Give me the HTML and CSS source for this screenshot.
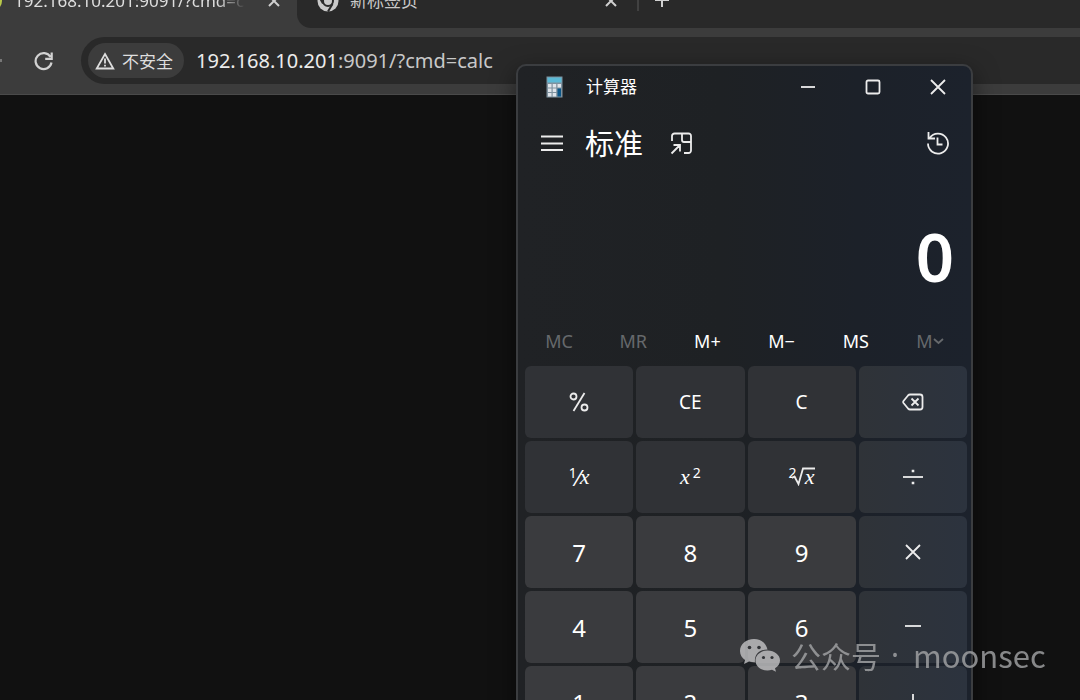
FILE: index.html
```html
<!DOCTYPE html>
<html lang="zh-CN">
<head>
<meta charset="utf-8">
<title>计算器</title>
<link rel="stylesheet" href="styles.css">
</head>
<body>
<header class="browser">
  <nav class="tabs">
    <div class="tab tab-active">
      <span class="favicon"></span>
      <span class="tab-title">192.168.10.201:9091/?cmd=calc</span>
      <button class="tab-close" aria-label="关闭标签页"><svg width="12" height="12" viewBox="0 0 12 12"><path d="M1 1l10 10M11 1L1 11"/></svg></button>
    </div>
    <div class="tab-rest">
      <div class="tab tab-new">
        <svg class="chrome" width="22" height="22" viewBox="0 0 22 22"><circle cx="11" cy="11" r="10.5" fill="#c9c9c9"/><circle cx="11" cy="11" r="5" fill="#c9c9c9" stroke="#2a2a2a" stroke-width="2"/><path d="M11 5.5h9.500M6 13.500L1.500 5.500M15.500 14L11 21.500" stroke="#2a2a2a" stroke-width="2"/></svg>
        <span class="tab-title">新标签页</span>
        <button class="tab-close" aria-label="关闭标签页"><svg width="12" height="12" viewBox="0 0 12 12"><path d="M1 1l10 10M11 1L1 11"/></svg></button>
      </div>
      <button class="tab-add" aria-label="打开新标签页"><svg width="16" height="16" viewBox="0 0 16 16"><path d="M8 0v14M1 7h14"/></svg></button>
    </div>
  </nav>
  <div class="toolbar">
    <span class="forward"></span>
    <button class="reload" aria-label="重新加载"><svg width="20" height="20" viewBox="0 0 20 20"><path d="M16.500 6A8 8 0 1 0 17.500 11.500M17.700 1.500v6.300h-6.500" fill="none" stroke="#d2d2d2" stroke-width="2.200"/></svg></button>
    <div class="omnibox">
      <button class="chip"><svg width="20" height="18" viewBox="0 0 20 18"><path d="M10 2L18.300 16.500H1.700Z" fill="none" stroke="#dedede" stroke-width="1.800"/><path d="M10 6.500v5M10 12.800v1.800" stroke="#dedede" stroke-width="1.800"/></svg>不安全</button>
      <div class="url"><span class="host">192.168.10.201</span>:9091/?cmd=calc</div>
    </div>
  </div>
</header>

<main class="calc">
  <div class="titlebar">
    <svg class="app-icon" width="17" height="22" viewBox="0 0 17 22"><rect x=".5" y=".5" width="16" height="21" fill="#7f929f"/><rect x="1.500" y="1.500" width="14" height="5" fill="#5bb9d6"/><path d="M2 8h3.500v3.500H2zM6.700 8h3.500v3.500H6.700zM11.500 8H15v3.500h-3.500zM2 12.500h3.500V16H2zM6.700 12.500h3.500V16H6.700zM2 17h3.500v3.500H2zM6.700 17h3.500v3.500H6.700z" fill="#dfe4ea"/><path d="M11.500 12.500H15v8h-3.500z" fill="#0b5688"/></svg>
    <span class="app-name">计算器</span>
    <button aria-label="最小化"><svg width="16" height="16" viewBox="0 0 16 16"><path d="M1 8h14"/></svg></button>
    <button aria-label="最大化"><svg width="16" height="16" viewBox="0 0 16 16"><rect x="1.500" y="1.500" width="13" height="13" rx="1.500"/></svg></button>
    <button aria-label="关闭"><svg width="16" height="16" viewBox="0 0 16 16"><path d="M1 1l14 14M15 1L1 15"/></svg></button>
  </div>
  <div class="mode">
    <button class="menu" aria-label="导航"><svg width="22" height="16" viewBox="0 0 22 16"><path d="M0 1.500h22M0 8.500h22M0 15h22"/></svg></button>
    <h1>标准</h1>
    <button aria-label="保持在顶部"><svg width="23" height="23" viewBox="0 0 23 23"><path d="M2 9V4a2.500 2.500 0 0 1 2.500-2.500h14A2.500 2.500 0 0 1 21 4v14.500a2.500 2.500 0 0 1-2.500 2.500H14M12 1.500v6.500a2 2 0 0 0 2 2h7M1.500 21.500L10 13M3.500 13H10v6.500"/></svg></button>
    <button class="history" aria-label="历史记录"><svg width="24" height="24" viewBox="0 0 24 24"><path d="M2.500 1v6.500H9M3.700 7A10 10 0 1 1 2 12.500M11.500 6.500v7h5"/></svg></button>
  </div>
  <output class="display">0</output>
  <div class="memory">
    <button disabled>MC</button><button disabled>MR</button><button>M+</button><button>M−</button><button>MS</button><button disabled>M<svg width="11" height="8" viewBox="0 0 11 8"><path d="M1 2l4.500 4L10 2"/></svg></button>
  </div>
  <div class="keys">
    <button aria-label="百分比"><svg width="20" height="20" viewBox="0 0 20 20"><circle cx="4.500" cy="4.500" r="3"/><circle cx="15.500" cy="15.500" r="3"/><path d="M15.500 1L4.500 19"/></svg></button>
    <button>CE</button>
    <button>C</button>
    <button aria-label="退格"><svg width="22" height="18" viewBox="0 0 22 18"><path d="M8 1.500h10a2.500 2.500 0 0 1 2.500 2.500v10a2.500 2.500 0 0 1-2.500 2.500H8Q7 16.500 6 15.500L1.500 10Q.8 9 1.500 8L6 2.500Q7 1.500 8 1.500ZM9.500 5.500l7 7M16.500 5.500l-7 7"/></svg></button>
    <button><span class="fn"><sup>1</sup><span class="slash">⁄</span><i>x</i></span></button>
    <button><span class="fn square"><i>x</i><sup>2</sup></span></button>
    <button><span class="fn"><sup>2</sup><span class="root"><svg width="24" height="20" viewBox="0 0 24 20"><path d="M1 12l2.500-1.500L7.500 18 12 2.500h12"/></svg><i>x</i></span></span></button>
    <button aria-label="除以"><svg width="20" height="20" viewBox="0 0 20 20"><path d="M0 10h20"/><path d="M8.700 4h2.600M8.700 16h2.600" stroke-width="2.600"/></svg></button>
    <button class="num">7</button><button class="num">8</button><button class="num">9</button>
    <button aria-label="乘以"><svg width="16" height="16" viewBox="0 0 16 16"><path d="M1 1l14 14M15 1L1 15"/></svg></button>
    <button class="num">4</button><button class="num">5</button><button class="num">6</button>
    <button aria-label="减"><svg width="18" height="18" viewBox="0 0 18 18"><path d="M1 8h16"/></svg></button>
    <button class="num">1</button><button class="num">2</button><button class="num">3</button>
    <button aria-label="加"><svg width="18" height="18" viewBox="0 0 18 18"><path d="M1 9h16M9 1v16"/></svg></button>
  </div>
</main>

<div class="watermark">
  <svg width="42" height="34" viewBox="0 0 42 34"><path d="M15 1C7 1 1 6 1 13c0 4 2 7 5 9l-1 4 5-2.500c2 .5 4 .7 6 .7C15 16 21 11.500 28.500 11.500 27 5 22 1 15 1Z"/><path d="M28.500 12.500C21.500 12.500 16.500 17 16.500 22.500s5 10 12 10c1.500 0 3-.2 4.500-.7l4 2-1-3.500c3-2 5-4.500 5-7.800 0-5.500-5.500-10-12.500-10Z"/><g fill="#303236"><circle cx="10.500" cy="9.500" r="1.800"/><circle cx="20" cy="9.500" r="1.800"/><circle cx="24.500" cy="19.500" r="1.600"/><circle cx="33" cy="19.500" r="1.600"/></g></svg>
  <span>公众号</span><span class="latin">·</span><span class="account">moonsec</span>
</div>
</body>
</html>
```
FILE: styles.css
```css
* { box-sizing: border-box; }

body {
  margin: 0;
  height: 100vh;
  overflow: hidden;
  position: relative;
  background: #111;
  color: #fff;
  font-family: "Noto Sans", "Noto Sans CJK SC", sans-serif;
}

button {
  display: flex;
  align-items: center;
  justify-content: center;
  padding: 0;
  border: 0;
  background: none;
  color: inherit;
  font: inherit;
}

svg { flex: none; }

.browser {
  background: #3c3c3c;
  border-bottom: 1px solid #4a4a4a;
}

.tabs {
  display: flex;
  height: 54px;
  margin-top: -26px;
  font-size: 17px;
  line-height: 26px;
  color: #c8c8c8;
}

.tabs path {
  fill: none;
  stroke: #d0d0d0;
  stroke-width: 2;
}

.tabs .chrome path { stroke: #2a2a2a; }

.tab {
  display: flex;
  align-items: center;
}

.tab-active {
  width: 297px;
  padding-right: 17px;
  gap: 12px;
}

.favicon {
  width: 20px;
  height: 20px;
  margin-left: -18px;
  border-radius: 50%;
  background: #b9c94a;
}

.tab-title {
  flex: 1;
  overflow: hidden;
  white-space: nowrap;
}

.tab-active .tab-title {
  margin-right: 6px;
  color: #dedede;
  mask-image: linear-gradient(90deg, #000 86%, transparent 98%);
}

.tab-rest {
  display: flex;
  flex: 1;
  align-items: center;
  background: #292929;
  border-bottom-left-radius: 14px;
}

.tab-new {
  width: 342px;
  padding: 0 20px;
  gap: 11px;
  border-right: 2px solid #414141;
  height: 20px;
}

.tab-add { margin-left: 15px; }

.toolbar {
  display: flex;
  align-items: center;
  padding: 9px 0 10px;
}

.forward {
  width: 2px;
  height: 3px;
  background: #777;
}

.reload { margin: 0 27px 0 32px; }

.omnibox {
  display: flex;
  flex: 1;
  align-items: center;
  gap: 12px;
  height: 47px;
  padding-left: 7px;
  border-radius: 24px 0 0 24px;
  background: #292929;
}

.chip {
  height: 35px;
  padding: 0 11px 0 7px;
  gap: 7px;
  border-radius: 18px;
  background: #3c3c3c;
  color: #dedede;
  font-size: 17px;
}

.url {
  font-size: 20px;
  color: #c8c8c8;
}

.host { color: #ececec; }

.calc {
  position: absolute;
  top: 64px;
  left: 516px;
  width: 457px;
  border: 2px solid #3b3d40;
  border-radius: 10px;
  background: linear-gradient(90deg, #202225 0%, #1e2124 45%, #1c2129 75%, #1c222c 100%);
  box-shadow: 0 8px 24px rgba(0, 0, 0, .5);
}

.calc svg {
  fill: none;
  stroke: #ececec;
  stroke-width: 1.8;
}

.calc .app-icon { stroke: none; }

.titlebar {
  display: flex;
  align-items: center;
  height: 41px;
  padding: 0 1px 0 28px;
}

.app-name {
  flex: 1;
  margin-left: 23px;
  font-size: 17px;
  line-height: 24px;
}

.titlebar button {
  width: 65px;
  height: 41px;
}

.mode {
  display: flex;
  align-items: center;
  height: 72px;
  padding: 0 21px 0 23px;
}

h1 {
  margin: 0 27px 0 22px;
  padding-bottom: 2px;
  font-size: 29px;
  font-weight: 400;
}

.history { margin-left: auto; }

.display {
  display: block;
  height: 147px;
  padding: 31px 17px 0;
  text-align: right;
  font-size: 67px;
  font-weight: 600;
  line-height: 92px;
}

.memory {
  display: grid;
  grid-template-columns: repeat(6, 1fr);
  height: 30px;
  margin: 0 4px 10px;
  font-size: 18px;
}

.memory button:disabled { color: #66696c; }
.memory button:disabled svg { stroke: #66696c; }

.keys {
  display: grid;
  grid-template-columns: repeat(4, 1fr);
  grid-auto-rows: 72px;
  gap: 3px;
  padding: 0 4px 4px 7px;
}

.keys > button {
  border-radius: 6px;
  background: #303236;
  font-size: 19px;
}

.keys > button:nth-child(4n) {
  background: linear-gradient(90deg, #2f3338, #2c333e);
}

.keys > .num {
  background: #3a3b3e;
  font-size: 24px;
}

.fn {
  display: flex;
  align-items: center;
  font-size: 22px;
  line-height: 22px;
}

.fn i { font-family: "Liberation Serif", serif; }

.fn sup {
  align-self: flex-start;
  font-size: 14px;
  line-height: 14px;
}

.square { gap: 3px; }

.root {
  display: grid;
  margin-left: -6px;
}

.root > * { grid-area: 1 / 1; }
.root i { justify-self: end; }

.watermark {
  position: absolute;
  top: 632px;
  left: 739px;
  display: flex;
  align-items: center;
  gap: 10px;
  color: #a5a6a8;
  opacity: .8;
  font-family: "Noto Sans CJK SC", sans-serif;
  font-size: 30px;
  line-height: 46px;
}

.watermark svg { fill: #c5c5c7; }
.watermark .latin { font-family: "Noto Sans", sans-serif; }
.watermark .account { margin-left: 4px; font-size: 31px; }
```
